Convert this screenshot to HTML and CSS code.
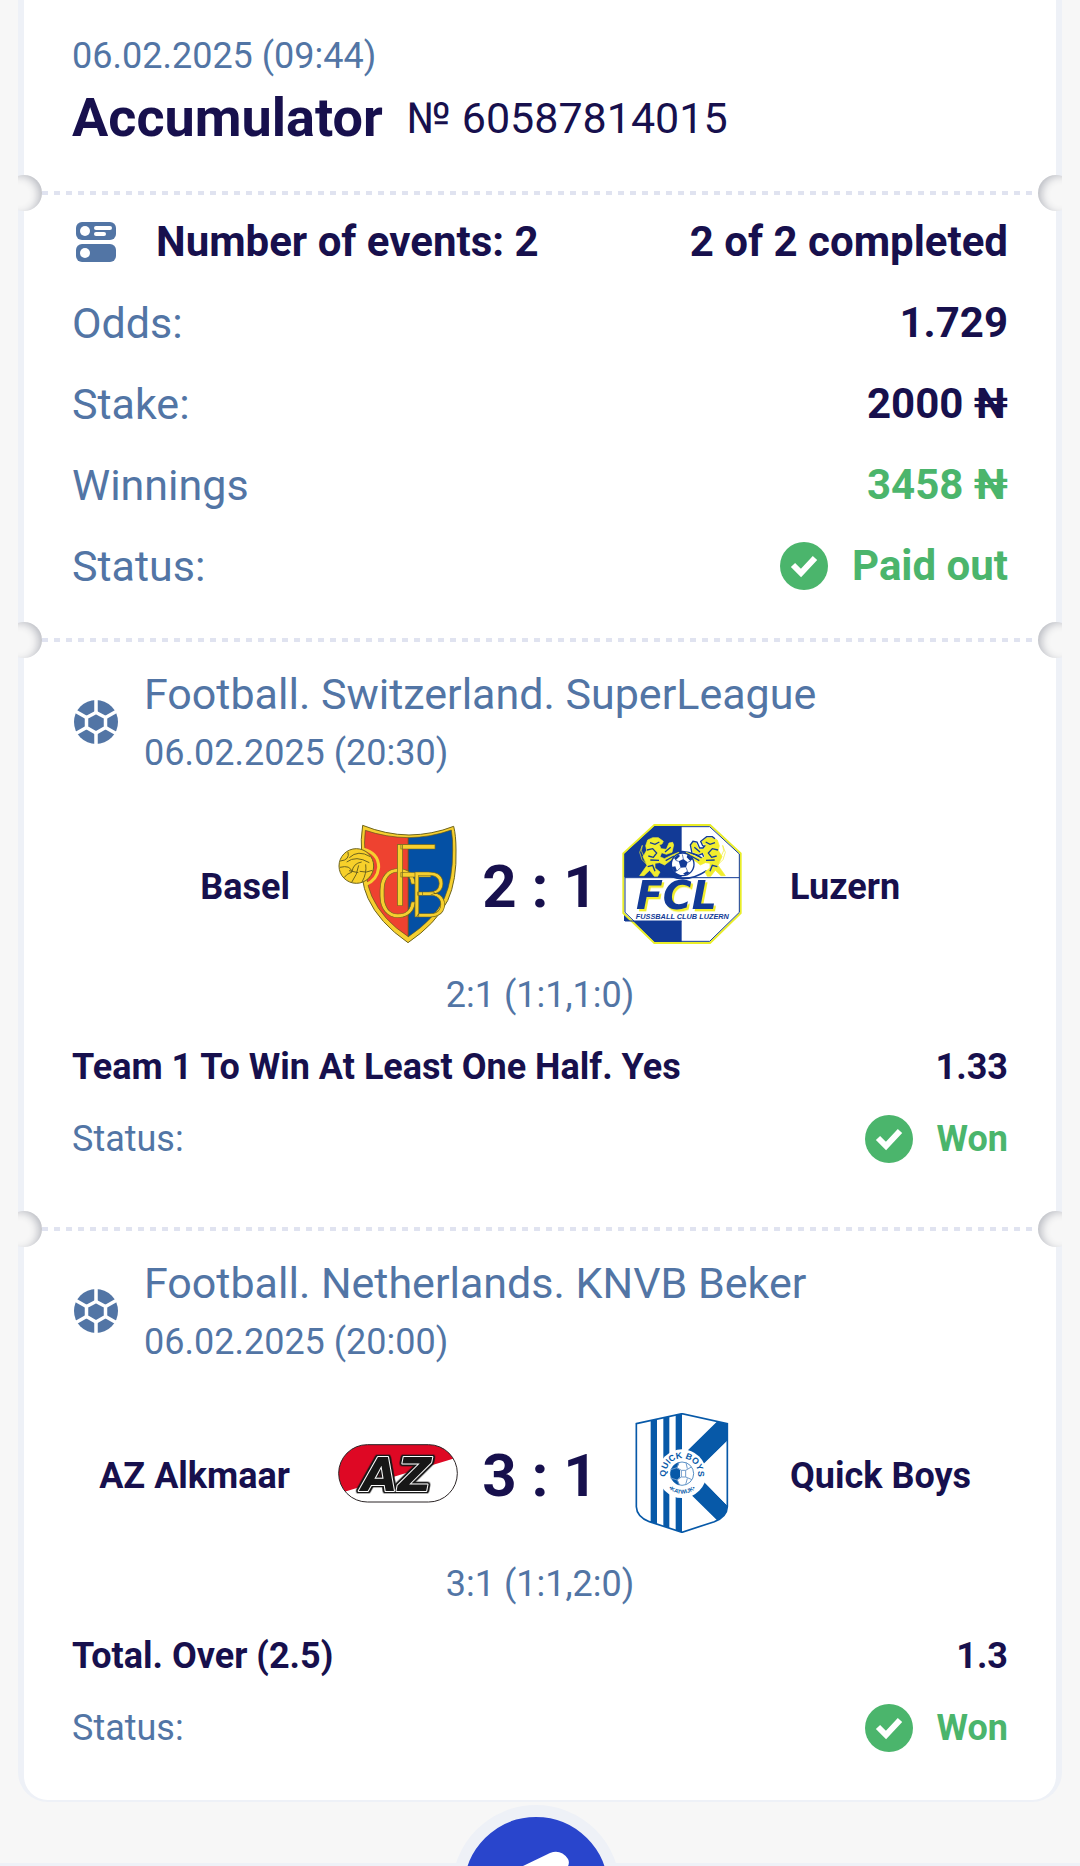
FILE: index.html
```html
<!DOCTYPE html>
<html lang="en">
<head>
    <meta charset="UTF-8">
    <meta name="viewport" content="width=device-width, initial-scale=1.0">
    <title>Bet Slip</title>
    <link rel="stylesheet" href="styles.css">
</head>
<body>

    <!-- Shared icons -->
    <svg class="sprite" aria-hidden="true">
        <symbol id="icon-check" viewBox="0 0 48 48">
            <circle cx="24" cy="24" r="24" fill="currentColor"/>
            <path d="M13 23l8 8 14-15" fill="none" stroke="#fff" stroke-width="6"/>
        </symbol>
        <symbol id="icon-ball" viewBox="0 0 48 48">
            <circle cx="24" cy="24" r="22" fill="currentColor"/>
            <path d="M24 14.5l9.5 5v10L24 35l-9.5-5.500v-10z" fill="none" stroke="#fff" stroke-width="3.5"/>
            <path d="M24 14.5V0M33.500 19.500L45 13M33.500 29.500L45 36M24 35V48M14.500 29.500L3 36M14.500 19.500L3 13" fill="none" stroke="#fff" stroke-width="3.500"/>
        </symbol>
        <symbol id="icon-events" viewBox="0 0 48 48">
            <rect x="4" y="4" width="40" height="18" rx="6" fill="currentColor"/>
            <rect x="4" y="26" width="40" height="18" rx="6" fill="currentColor"/>
            <circle cx="13" cy="13" r="5" fill="#fff"/>
            <circle cx="13" cy="35" r="5" fill="#fff"/>
            <rect x="22" y="8" width="18" height="4" rx="2" fill="#fff"/>
            <rect x="22" y="14" width="12" height="4" rx="2" fill="#fff"/>
        </symbol>
    </svg>

    <main class="slip">
        <!-- Slip header -->
        <header class="slip-header">
            <time class="date" datetime="2025-02-06T09:44">06.02.2025 (09:44)</time>
            <div class="slip-title">
                <h1>Accumulator</h1>
                <span>№ 60587814015</span>
            </div>
        </header>

        <div class="divider"></div>

        <!-- Summary -->
        <section class="summary">
            <div class="row strong">
                <h2 class="with-icon">
                    <svg class="icon"><use href="#icon-events"/></svg>
                    Number of events: 2
                </h2>
                <span>2 of 2 completed</span>
            </div>
            <dl class="summary-list">
                <div class="row">
                    <dt>Odds:</dt>
                    <dd>1.729</dd>
                </div>
                <div class="row">
                    <dt>Stake:</dt>
                    <dd>2000 ₦</dd>
                </div>
                <div class="row">
                    <dt>Winnings</dt>
                    <dd class="green">3458 ₦</dd>
                </div>
                <div class="row">
                    <dt>Status:</dt>
                    <dd class="green status"><svg class="icon"><use href="#icon-check"/></svg>Paid out</dd>
                </div>
            </dl>
        </section>

        <div class="divider"></div>

        <!-- Event 1 -->
        <section class="event">
            <div class="event-head">
                <svg class="icon"><use href="#icon-ball"/></svg>
                <div>
                    <h2>Football. Switzerland. SuperLeague</h2>
                    <time class="date" datetime="2025-02-06T20:30">06.02.2025 (20:30)</time>
                </div>
            </div>
            <div class="match">
                <span class="team home">Basel</span>
                <svg class="crest" viewBox="57 72 360 360" role="img" aria-label="Basel crest">
                    <path d="M131 76Q200 104 270 105Q340 104 404 79Q411 106 411 150Q414 240 386 302Q350 372 267 428Q180 368 147 295Q122 240 128 160Q124 120 131 76Z" fill="#f6cf2f" stroke="#6d641e" stroke-width="3"/>
                    <path d="M268 113Q200 112 139 91Q134 130 139 165Q136 235 158 288Q190 360 268 410Z" fill="#ee4230" stroke="#5b5420" stroke-width="2"/>
                    <path d="M268 113Q336 112 397 90Q402 118 401 150Q402 235 376 295Q346 358 268 410Z" fill="#0450a4" stroke="#5b5420" stroke-width="2"/>
                    <g class="basel-letters">
                        <text x="170" y="350" font-size="200">C</text>
                        <text x="212" y="315" font-size="256">F</text>
                        <text x="271" y="350" font-size="190">B</text>
                    </g>
                    <path d="M131 147Q179 158 179 202Q175 240 140 254" fill="none" stroke="#f6cf2f" stroke-width="9"/>
                    <circle cx="112" cy="198" r="52" fill="#f7d02a" stroke="#6d641e" stroke-width="3"/>
                    <path d="M87 156Q93 180 64 183M91 173Q117 148 154 170M83 186Q111 165 151 188M63 202Q94 194 99 216Q82 222 75 233M99 216Q102 190 128 186M119 196Q115 224 98 247M140 193Q144 220 129 246M122 214Q142 220 160 211M90 212L118 218" fill="none" stroke="#6d641e" stroke-width="3"/>
                </svg>
                <strong class="score">2 : 1</strong>
                <svg class="crest" viewBox="66 72 360 360" role="img" aria-label="Luzern crest">
                    <path d="M163 75H330L422 160V339L330 429H163L70 339V160Z" fill="#fff"/>
                    <path d="M163 75H245V232H72V160Z M72 363H245V428H163L72 342Z" fill="#123a96"/>
                    <path d="M245 75H330L422 160V339L330 429H163L70 339V160L163 75Z" fill="none" stroke="#e9ed28" stroke-width="6"/>
                    <path d="M164 80H329L418 162V337L329 424H164L75 337V162Z" fill="none" stroke="#123a96" stroke-width="3"/>
                    <path d="M75 233H418M75 363H245" stroke="#123a96" stroke-width="3"/>
                    <path d="M178 184Q210 158 247 155Q288 158 317 184M180 212Q248 260 320 212" fill="none" stroke="#123a96" stroke-width="5"/>
                    <g class="lion">
                        <path id="lion" d="M143 120L158 113L175 113L190 124L186 132L178 134L183 146L199 148L207 129L218 127L221 135L216 157L199 163L185 158L180 170L193 176L216 165L236 157L239 162L218 176L194 195L179 188L165 190L165 204L180 216L173 229H163L149 211L132 227H119L141 196L129 170L140 151L137 137Z"/>
                        <path d="M134 175L124 152L127 136L119 157L126 179L143 196" fill="none"/>
                        <use href="#lion" transform="matrix(-1 0 0 1 495 0)"/>
                        <path d="M361 175L371 152L368 136L376 157L369 179L352 196" fill="none"/>
                    </g>
                    <path class="lion-lines" d="M150 128L165 133L178 126M141 150L158 146L170 159L160 172L145 168M151 180L177 181M143 200L158 196L165 214M195 156L212 142M197 182L222 168M345 128L330 133L317 126M354 150L337 146L325 159L335 172L350 168M344 180L318 181M352 200L337 196L330 214M300 156L283 142M298 182L273 168"/>
                    <path class="lion-lines" d="M345 116L337 110L320 110L302 124L308 137L314 138L309 144L299 144L291 126L279 124L271 135L276 160L296 166L307 161L311 170"/>
                    <circle cx="248" cy="193" r="34" fill="#fff" stroke="#123a96" stroke-width="4"/>
                    <path d="M236 184L250 177L263 187L258 202L242 203ZM222 174L235 163L240 168L227 181ZM263 163L278 177L271 183L260 172ZM215 201L226 199L231 213L224 217ZM249 221L261 214L270 218L256 226Z" fill="#123a96"/>
                    <path d="M236 184L227 181M250 177L247 163M263 187L272 183M258 202L263 215M242 203L231 213" stroke="#123a96" stroke-width="2"/>
                    <text class="luzern-letters" x="108" y="327">FCL</text>
                    <text class="luzern-name" x="247" y="356">FUSSBALL CLUB LUZERN</text>
                </svg>
                <span class="team">Luzern</span>
            </div>
            <div class="event-details">
                <p class="periods">2:1 (1:1,1:0)</p>
                <div class="row strong">
                    <span>Team 1 To Win At Least One Half. Yes</span>
                    <span>1.33</span>
                </div>
                <div class="row">
                    <span>Status:</span>
                    <strong class="green status"><svg class="icon"><use href="#icon-check"/></svg>Won</strong>
                </div>
            </div>
        </section>

        <div class="divider"></div>

        <!-- Event 2 -->
        <section class="event last">
            <div class="event-head">
                <svg class="icon"><use href="#icon-ball"/></svg>
                <div>
                    <h2>Football. Netherlands. KNVB Beker</h2>
                    <time class="date" datetime="2025-02-06T20:00">06.02.2025 (20:00)</time>
                </div>
            </div>
            <div class="match">
                <span class="team home">AZ Alkmaar</span>
                <svg class="crest" viewBox="57 39 360 360" role="img" aria-label="AZ Alkmaar crest">
                    <clipPath id="az-clip"><rect x="59" y="134" width="356" height="172" rx="86"/></clipPath>
                    <g clip-path="url(#az-clip)">
                        <rect x="57" y="132" width="360" height="176" fill="#fff"/>
                        <path d="M57 132H417V172L57 281Z" fill="#de0824"/>
                    </g>
                    <rect x="59" y="134" width="356" height="172" rx="86" fill="none" stroke="#2b2526" stroke-width="3"/>
                    <text class="az-letters" x="128" y="273">AZ</text>
                </svg>
                <strong class="score">3 : 1</strong>
                <svg class="crest" viewBox="66 39 360 360" role="img" aria-label="Quick Boys crest">
                    <clipPath id="qb-clip"><path d="M109 71L246 41L382 71V320Q381 350 343 365L246 397L148 365Q110 350 109 320Z"/></clipPath>
                    <g clip-path="url(#qb-clip)">
                        <rect x="100" y="39" width="290" height="360" fill="#fff"/>
                        <path d="M152 39H171V399H152ZM190 39H208V399H190ZM227 39H246V399H227Z" fill="#0759a8"/>
                        <path d="M246 257L365 374L420 355L300 233L282 220L395 109V58L356 55L246 159Z" fill="#0759a8"/>
                        <path d="M246 39L352 64L246 168ZM390 115L286 219L390 325ZM246 262L345 360L246 399Z" fill="#fff"/>
                    </g>
                    <path d="M109 71L246 41L382 71V320Q381 350 343 365L246 397L148 365Q110 350 109 320Z" fill="none" stroke="#0759a8" stroke-width="5"/>
                    <circle cx="246" cy="221" r="73" fill="#fff"/>
                    <circle cx="246" cy="221" r="35" fill="#fff" stroke="#0759a8" stroke-width="2"/>
                    <path d="M239 187Q213 193 211 221Q214 249 239 255L232 239L240 232V210L231 204Z" fill="#0759a8"/>
                    <path d="M212 209L231 203L244 211H257L274 201M212 234L231 240L244 231H257L276 239M244 211V231M257 211V231M231 203L237 187M262 206L258 188M262 235L257 254M232 240L238 254" fill="none" stroke="#6f9bcb" stroke-width="3"/>
                    <path id="qb-top" d="M202 242A48 48 0 1 1 290 242" fill="none"/>
                    <path id="qb-bottom" d="M186 221A60 60 0 0 0 306 221" fill="none"/>
                    <text class="qb-name"><textPath href="#qb-top" startOffset="50%">QUICK BOYS</textPath></text>
                    <text class="qb-place"><textPath href="#qb-bottom" startOffset="50%">•KATWIJK•</textPath></text>
                </svg>
                <span class="team">Quick Boys</span>
            </div>
            <div class="event-details">
                <p class="periods">3:1 (1:1,2:0)</p>
                <div class="row strong">
                    <span>Total. Over (2.5)</span>
                    <span>1.3</span>
                </div>
                <div class="row">
                    <span>Status:</span>
                    <strong class="green status"><svg class="icon"><use href="#icon-check"/></svg>Won</strong>
                </div>
            </div>
        </section>
    </main>

    <!-- Bottom bar with the floating coupon button -->
    <nav class="bottom-bar">
        <button type="button" class="coupon-button" aria-label="Bet slip">
            <svg viewBox="0 0 144 144" aria-hidden="true">
                <path d="M40 58L86 36Q97 32 104 42Q107 48 100 54L72 92L38 106Q26 108 28 94Z" fill="#fff"/>
            </svg>
        </button>
    </nav>

</body>
</html>
```

FILE: styles.css
```css
* {
    margin: 0;
    padding: 0;
    box-sizing: border-box;
}

html {
    height: 100%;
    overflow: hidden;
}

body {
    font-family: Roboto, Arial, sans-serif;
    font-size: 36px;
    line-height: 48px;
    color: #5275a5;
    background-color: #f7f7f7;
    display: flex;
    flex-direction: column;
    min-height: 100vh;
}

h2, dt {
    font-size: 43px;
    font-weight: 400;
}

.sprite {
    display: none;
}

.icon {
    display: block;
    width: 48px;
    height: 48px;
    flex-shrink: 0;
}

/* Slip card */
.slip {
    margin: 0 24px;
    background-color: #fff;
    border-radius: 0 0 24px 24px;
    box-shadow: 0 -4px 0 6px #eef1f7;
}

.slip-header {
    padding: 35px 48px 43px;
}

.date {
    display: block;
    line-height: 42px;
}

.slip-title {
    display: flex;
    align-items: center;
    gap: 24px;
    margin-top: 9px;
    line-height: 64px;
    font-size: 43px;
    color: #17104d;
}

.slip-title h1 {
    font-size: 54px;
    font-weight: 700;
}

/* Perforated line with a notch at each end */
.divider {
    position: relative;
    height: 4px;
    margin: -2px 18px;
    background: repeating-linear-gradient(to right, #e0e3f0 0 6px, transparent 6px 12px);
}

.divider::before,
.divider::after {
    content: "";
    position: absolute;
    top: -16px;
    width: 36px;
    height: 36px;
    border-radius: 50%;
    background-color: #f7f7f7;
}

.divider::before {
    left: -36px;
    clip-path: inset(0 0 0 12px);
    box-shadow: inset -5px 2px 8px -2px rgba(40, 45, 70, 0.3);
}

.divider::after {
    right: -36px;
    clip-path: inset(0 12px 0 0);
    box-shadow: inset 5px 2px 8px -2px rgba(40, 45, 70, 0.3);
}

/* Rows */
.row {
    display: flex;
    justify-content: space-between;
    align-items: center;
}

.strong, dd {
    font-weight: 700;
    color: #17104d;
}

.green {
    color: #4bb56c;
}

.status {
    display: flex;
    align-items: center;
    gap: 24px;
}

/* Summary */
.summary {
    padding: 25px 48px 50px;
    font-size: 42px;
}

.summary-list {
    display: flex;
    flex-direction: column;
    gap: 33px;
    margin-top: 33px;
}

.with-icon {
    display: flex;
    align-items: center;
    gap: 36px;
    font-size: 42px;
    font-weight: 700;
}

.with-icon .icon {
    color: #5275a5;
}

/* Events */
.event {
    padding: 30px 48px 66px;
}

.event.last {
    padding-bottom: 48px;
}

.event-head {
    display: flex;
    align-items: center;
    gap: 24px;
}

.event-head .date {
    margin-top: 14px;
}

.match {
    display: grid;
    grid-template-columns: 1fr 120px 164px 120px 1fr;
    align-items: center;
    margin: 50px 0 27px;
    color: #17104d;
}

.team {
    padding: 6px 0 0 48px;
    font-weight: 700;
}

.team.home {
    padding: 6px 48px 0 0;
    text-align: right;
}

.score {
    padding-top: 6px;
    font-size: 60px;
    line-height: 72px;
    text-align: center;
}

.crest {
    display: block;
    width: 120px;
    height: 120px;
}

.event-details {
    display: flex;
    flex-direction: column;
    gap: 24px;
}

.periods {
    text-align: center;
}

/* Crest lettering */
.basel-letters {
    font-weight: 300;
    fill: #f6cf2f;
    stroke: #6d641e;
    stroke-width: 2;
}

.lion {
    fill: #f1ed2d;
    stroke: #f1ed2d;
    stroke-width: 2;
}

.lion-lines {
    fill: none;
    stroke: #123a96;
    stroke-width: 4;
}

.luzern-letters {
    font-family: "DejaVu Sans", sans-serif;
    font-size: 118px;
    font-weight: 700;
    font-style: italic;
    fill: #123a96;
    filter: drop-shadow(6px 7px 0 #f1ed2d);
}

.luzern-name {
    font-family: "Liberation Sans", sans-serif;
    font-size: 22px;
    font-weight: 700;
    font-style: italic;
    text-anchor: middle;
    fill: #123a96;
}

.az-letters {
    font-family: "DejaVu Sans", sans-serif;
    font-size: 140px;
    font-weight: 700;
    font-style: italic;
    fill: #171717;
    stroke: #fff;
    stroke-width: 6;
    stroke-linejoin: round;
    paint-order: stroke;
    filter: drop-shadow(4px 0 0 #171717) drop-shadow(-4px 0 0 #171717) drop-shadow(0 4px 0 #171717) drop-shadow(0 -4px 0 #171717);
}

.qb-name, .qb-place {
    font-family: "Liberation Sans", sans-serif;
    font-size: 26px;
    font-weight: 700;
    text-anchor: middle;
    fill: #0759a8;
}

.qb-place {
    font-size: 17px;
}

/* Bottom bar */
.bottom-bar {
    position: fixed;
    left: 0;
    right: 0;
    bottom: 0;
    height: 3px;
    padding-right: 8px;
    display: flex;
    justify-content: center;
    align-items: flex-start;
    background-color: #eef1f7;
}

.coupon-button {
    width: 168px;
    height: 168px;
    margin-top: -58px;
    flex-shrink: 0;
    border: 12px solid #eef1f7;
    border-radius: 50%;
    background-color: #2945cc;
    cursor: pointer;
}

.coupon-button svg {
    display: block;
}
```
